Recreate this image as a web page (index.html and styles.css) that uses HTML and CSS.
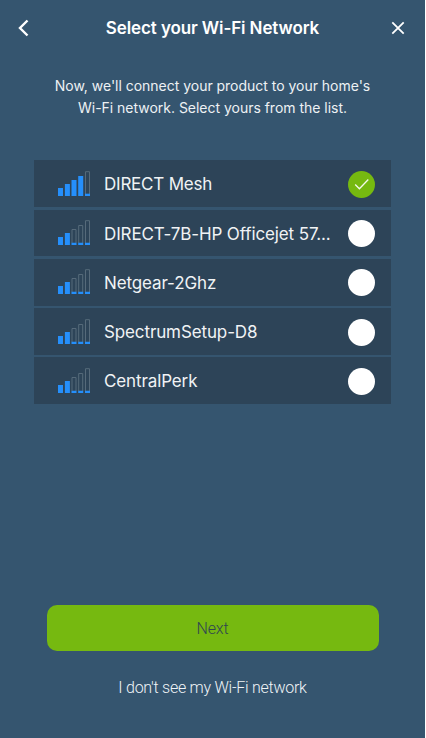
FILE: index.html
```html
<!DOCTYPE html>
<html lang="en">
<head>
<meta charset="utf-8">
<title>Select your Wi-Fi Network</title>
<link rel="stylesheet" href="styles.css">
</head>
<body>
<svg class="defs" aria-hidden="true">
  <symbol id="weak" viewBox="0 0 32 25">
    <path class="fill" d="M0 17h5v8H0zM6.900 13h5v12h-5z"/>
    <path class="outline" d="M14 23V9.500h4V23M20.700 23V5.500h4V23M27.500 23V.7h4V23"/>
    <path class="fill" d="M13.500 22.700h5V25h-5zM20.200 22.700h5V25h-5zM27 22.700h5V25h-5z"/>
  </symbol>
  <symbol id="strong" viewBox="0 0 32 25">
    <path class="fill" d="M0 17h5v8H0zM6.900 13h5v12h-5zM13.500 9h5v16h-5zM20.200 5h5v20h-5z"/>
    <path class="outline" d="M27.500 23V.7h4V23"/>
    <path class="fill" d="M27 22.700h5V25h-5z"/>
  </symbol>
</svg>
<main class="screen">
  <header class="header">
    <svg class="back" viewBox="0 0 12 18"><path d="M9.500 1.500L2 9l7.500 7.500"/></svg>
    <h1 class="title">Select your Wi-Fi Network</h1>
    <svg class="close" viewBox="0 0 14 14"><path d="M1.300 1.300l11.400 11.400M12.700 1.300l-11.400 11.400"/></svg>
  </header>
  <p class="intro">Now, we'll connect your product to your home's<br>Wi-Fi network. Select yours from the list.</p>
  <ul class="networks">
    <li class="network"><svg class="signal"><use href="#strong"/></svg><span class="name mesh">DIRECT Mesh</span><span class="radio selected"><svg viewBox="0 0 27 27"><path d="M7.200 13.500l4.200 4.300L20.300 8.500"/></svg></span></li>
    <li class="network"><svg class="signal"><use href="#weak"/></svg><span class="name">DIRECT-7B-HP Officejet 57...</span><span class="radio"></span></li>
    <li class="network"><svg class="signal"><use href="#weak"/></svg><span class="name">Netgear-2Ghz</span><span class="radio"></span></li>
    <li class="network"><svg class="signal"><use href="#weak"/></svg><span class="name">SpectrumSetup-D8</span><span class="radio"></span></li>
    <li class="network"><svg class="signal"><use href="#weak"/></svg><span class="name">CentralPerk</span><span class="radio"></span></li>
  </ul>
  <footer class="actions">
    <button class="next">Next</button>
    <a class="missing">I don't see my Wi-Fi network</a>
  </footer>
</main>
</body>
</html>
```
FILE: styles.css
```css
* { box-sizing: border-box; }
body { margin: 0; background: #fff; font-family: Inter, "Liberation Sans", sans-serif; }
.defs { position: absolute; width: 0; height: 0; }
.screen { width: 425px; height: 738px; display: flex; flex-direction: column; background: #35556f; overflow: hidden; color: #fff; }
.header { height: 56px; padding: 0 20px 0 18px; display: grid; grid-template-columns: 14px 1fr 14px; align-items: center; flex: none; }
.back, .close { fill: none; stroke: #fff; }
.back { width: 12px; height: 18px; stroke-width: 2.4; }
.close { width: 14px; height: 14px; stroke-width: 1.8; }
.title { margin: 0; font-size: 17px; font-weight: 600; line-height: 24px; letter-spacing: -0.11px; text-align: center; white-space: nowrap; padding-left: 2px; }
.intro { margin: 19px 0 0; height: 44px; font-size: 14px; line-height: 22px; letter-spacing: -0.02px; text-align: center; color: #edf1f4; white-space: nowrap; }
.networks { list-style: none; margin: 41.300px 34px 0; padding: 0; display: flex; flex-direction: column; gap: 2.400px; width: 357px; height: 244px; }
.network { flex: 1; padding: 1px 16px 0 24px; display: flex; align-items: center; background: #2d4458; }
.signal { width: 32px; height: 25px; margin: -2px 14px 0 0; flex: none; }
.fill { fill: #258ffb; }
.outline { fill: none; stroke: #566a7a; stroke-width: 1; }
.name { flex: 1; font-size: 17px; line-height: 24px; letter-spacing: -0.12px; white-space: nowrap; color: #f0f3f5; }
.mesh { letter-spacing: -0.22px; }
.radio { width: 27px; height: 27px; border-radius: 50%; background: #fff; flex: none; }
.selected { background: #76b910; }
.selected svg { display: block; fill: none; stroke: #f4faeb; stroke-width: 1.300; }
.actions { margin: auto 46.500px 38px; display: flex; flex-direction: column; align-items: center; gap: 25px; }
.next { width: 332px; height: 46px; padding: 1px 0 0; border: 0; border-radius: 10px; background: #76b910; color: #304650; font: 300 16px/24px Roboto, sans-serif; letter-spacing: -0.2px; }
.missing { color: #f0f4f7; font: 300 16px/24px Roboto, sans-serif; letter-spacing: -0.26px; white-space: nowrap; }
```
